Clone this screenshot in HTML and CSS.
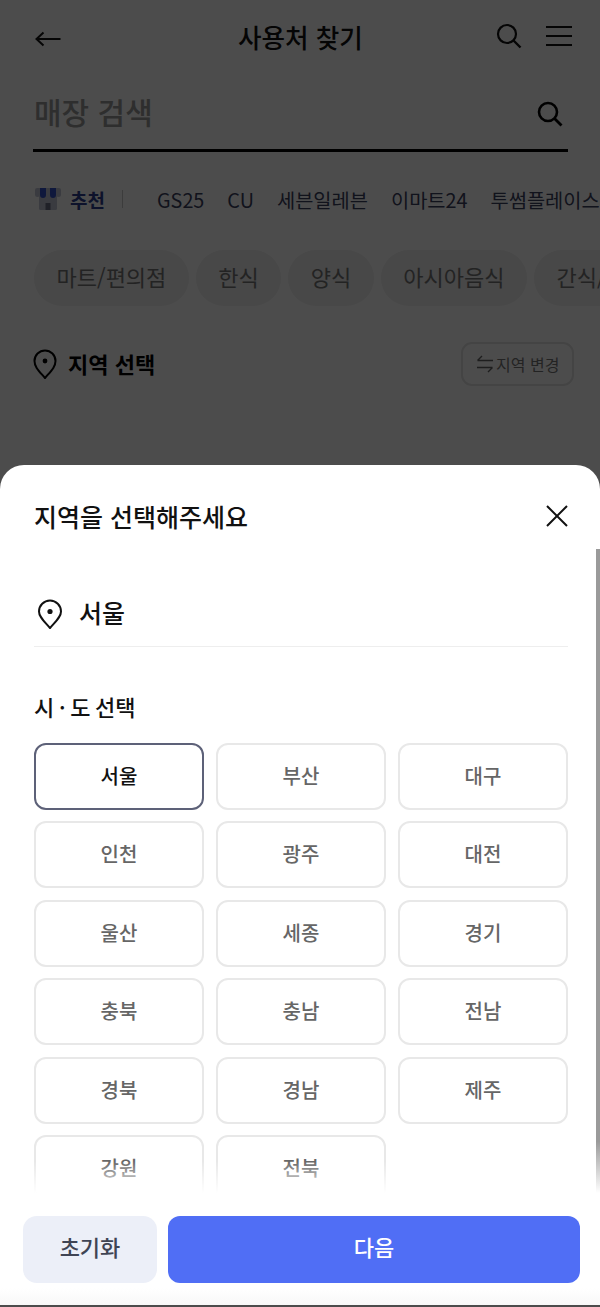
FILE: index.html
```html
<!DOCTYPE html>
<html lang="ko">
<head>
<meta charset="utf-8">
<title>사용처 찾기</title>
<link rel="stylesheet" href="styles.css">
</head>
<body>
<main class="page">
  <header class="top">
    <svg class="back" viewBox="0 0 26 16" width="26" height="16"><path d="M25.500 8H1.500M8.500 1.500 1.500 8l7 6.500" fill="none" stroke="#111" stroke-width="2"/></svg>
    <h1 class="top-title">사용처 찾기</h1>
    <div class="top-icons">
      <svg viewBox="0 0 26 26" width="26" height="26"><circle cx="11" cy="11" r="9" fill="none" stroke="#111" stroke-width="2.200"/><path d="M17.500 17.500 24.500 24.500" stroke="#111" stroke-width="2.400"/></svg>
      <svg viewBox="0 0 26 22" width="26" height="22"><path d="M0 2h26M0 11h26M0 20h26" stroke="#111" stroke-width="2"/></svg>
    </div>
  </header>
  <div class="search">
    <span class="search-ph">매장 검색</span>
    <svg viewBox="0 0 26 26" width="26" height="26"><circle cx="11" cy="11" r="9" fill="none" stroke="#000" stroke-width="2.600"/><path d="M17.500 17.500 24.500 24.500" stroke="#000" stroke-width="2.800"/></svg>
  </div>
  <nav class="brands">
    <span class="rec">
      <svg viewBox="0 0 26 22" width="26" height="22"><rect x="4" y="6" width="18" height="16" rx="1.500" fill="#c3c7d6"/><rect x="10.500" y="15" width="5" height="7" fill="#6b7188"/><path d="M0 2a2 2 0 0 1 2-2h3v6.500a2.500 2.500 0 0 1-5 0z" fill="#c3c7d6"/><path d="M5 0h6v7a3 3 0 0 1-6 0z" fill="#3553c8"/><path d="M11 0h4v7a2 2 0 0 1-4 0z" fill="#c3c7d6"/><path d="M15 0h6v7a3 3 0 0 1-6 0z" fill="#3553c8"/><path d="M21 0h3a2 2 0 0 1 2 2v4.500a2.500 2.500 0 0 1-5 0z" fill="#c3c7d6"/></svg>
      <b>추천</b>
    </span>
    <i class="sep"></i>
    <span>GS25</span><span>CU</span><span>세븐일레븐</span><span>이마트24</span><span>투썸플레이스</span>
  </nav>
  <div class="chips">
    <span class="chip">마트/편의점</span><span class="chip">한식</span><span class="chip">양식</span><span class="chip">아시아음식</span><span class="chip">간식/디저트</span>
  </div>
  <div class="area">
    <svg viewBox="0 0 24 30" width="24" height="30"><path d="M12 29C6 22 1.500 18 1.500 12a10.500 10.500 0 0 1 21 0C22.500 18 18 22 12 29z" fill="none" stroke="#000" stroke-width="2"/><circle cx="12" cy="12" r="2.400" fill="#000"/></svg>
    <strong class="area-title">지역 선택</strong>
    <button class="area-btn">
      <svg viewBox="0 0 18 18" width="18" height="18"><path d="M17 5.500H1.500M6 1 1.500 5.500M1 12.500h15.500M12 17l4.500-4.500" fill="none" stroke="#666" stroke-width="1.400"/></svg>
      지역 변경
    </button>
  </div>
</main>

<div class="dim"></div>

<section class="sheet">
  <div class="sheet-head">
    <h2 class="sheet-title">지역을 선택해주세요</h2>
    <svg viewBox="0 0 24 24" width="24" height="24"><path d="M2 2 22 22M22 2 2 22" stroke="#111" stroke-width="2"/></svg>
  </div>
  <div class="sheet-body">
    <div class="picked">
      <svg viewBox="0 0 26 30" width="26" height="30"><path d="M13 29C7 22 2 18 2 12.500a11 11 0 0 1 22 0C24 18 19 22 13 29z" fill="none" stroke="#111" stroke-width="2"/><circle cx="13" cy="12.500" r="2.600" fill="#111"/></svg>
      <span>서울</span>
    </div>
    <h3 class="sub">시 · 도 선택</h3>
    <div class="grid">
      <span class="cell on">서울</span><span class="cell">부산</span><span class="cell">대구</span>
      <span class="cell">인천</span><span class="cell">광주</span><span class="cell">대전</span>
      <span class="cell">울산</span><span class="cell">세종</span><span class="cell">경기</span>
      <span class="cell">충북</span><span class="cell">충남</span><span class="cell">전남</span>
      <span class="cell">경북</span><span class="cell">경남</span><span class="cell">제주</span>
      <span class="cell">강원</span><span class="cell">전북</span>
    </div>
    <div class="fade"></div>
    <div class="scrollbar"></div>
  </div>
  <div class="sheet-foot">
    <button class="btn-reset">초기화</button>
    <button class="btn-next">다음</button>
  </div>
</section>
</body>
</html>
```
FILE: styles.css
```css
* { box-sizing: border-box; }
html, body { margin: 0; padding: 0; }
body {
  width: 600px;
  height: 1307px;
  position: relative;
  overflow: hidden;
  background: #fff;
  font-family: "Noto Sans CJK KR", "Noto Sans", sans-serif;
  color: #111;
}
h1, h2, h3 { margin: 0; }
button { font-family: inherit; border: 0; padding: 0; }
svg { display: block; flex: none; }

.page { padding: 14px 0 0 34px; }
.top {
  display: flex;
  align-items: center;
  height: 46px;
  position: relative;
  padding-right: 28px;
  justify-content: space-between;
}
.back { margin: 4px 0 0 1px; }
.top-title {
  position: absolute;
  left: 204px;
  top: 0;
  font-size: 25.600px;
  line-height: 45px;
  font-weight: 500;
}
.top-icons { display: flex; align-items: center; gap: 24px; margin-top: -2px; }

.search {
  display: flex;
  justify-content: space-between;
  align-items: center;
  margin: 28px 32px 0 -1px;
  height: 64px;
  padding: 0 5px 10px 1px;
  border-bottom: 3px solid #000;
}
.search-ph { font-size: 30px; font-weight: 500; line-height: 44px; color: #9b9b9b; margin-bottom: 6px; }

.brands {
  display: flex;
  align-items: center;
  margin-top: 30px;
  height: 34px;
  white-space: nowrap;
  font-size: 19.800px;
  color: #3b4160;
  gap: 23px;
}
.rec { display: flex; align-items: center; gap: 9px; margin-left: 1px; }
.rec b { font-weight: 700; font-size: 19px; color: #2c3f8f; }
.sep { width: 1px; height: 18px; background: #c9c9c9; margin: 0 11px 0 -6px; }

.chips { display: flex; gap: 7px; margin-top: 34px; white-space: nowrap; }
.chip {
  flex: none;
  height: 56px;
  line-height: 52px;
  padding: 0 22.500px;
  border-radius: 28px;
  background: #f0f0f0;
  font-size: 22px;
  color: #777;
}

.area {
  display: flex;
  align-items: center;
  margin: 36px 26px 0 -1px;
  height: 44px;
}
.area-title { margin: -3px 0 0 11px; font-size: 22px; font-weight: 700; color: #000; }
.area-btn {
  margin-left: auto;
  display: flex;
  align-items: center;
  gap: 2px;
  width: 113px;
  height: 44px;
  padding-left: 13px;
  background: transparent;
  border: 2px solid #e4e4e4;
  border-radius: 11px;
  font-size: 16px;
  color: #777;
}

.dim {
  position: absolute;
  inset: 0;
  background: rgba(0, 0, 0, 0.7);
}

.sheet {
  position: absolute;
  left: 0;
  top: 465px;
  width: 600px;
  height: 840px;
  background: #fff;
  border-radius: 24px 24px 0 0;
  display: flex;
  flex-direction: column;
}
.sheet-head {
  flex: none;
  height: 84px;
  padding: 18px 31px 0 34px;
  display: flex;
  align-items: center;
  justify-content: space-between;
}
.sheet-title { font-size: 25px; font-weight: 500; line-height: 36px; color: #111; }

.sheet-body {
  position: relative;
  height: 644px;
  overflow: hidden;
  padding: 0 32px 0 34px;
}
.picked {
  display: flex;
  align-items: center;
  gap: 16px;
  height: 98px;
  padding: 32px 0 0 3px;
  border-bottom: 1px solid #eee;
  font-size: 25px;
  font-weight: 500;
}
.picked span { line-height: 34px; margin-top: -4px; }
.sub {
  margin-top: 42px;
  font-size: 22px;
  line-height: 34px;
  font-weight: 500;
  color: #111;
  word-spacing: -1.500px;
}
.grid {
  display: grid;
  grid-template-columns: repeat(3, 170px);
  grid-auto-rows: 67px;
  gap: 11.400px 12px;
  margin-top: 20px;
}
.cell {
  display: flex;
  align-items: center;
  justify-content: center;
  padding-bottom: 2px;
  border: 2px solid #e8e8e8;
  border-radius: 12px;
  font-size: 20px;
  font-weight: 500;
  color: #666;
}
.cell.on { border-color: #5d6178; color: #111; }
.fade {
  position: absolute;
  left: 0;
  right: 0;
  bottom: 0;
  height: 32px;
  background: linear-gradient(to bottom, rgba(255,255,255,0), #fff);
}
.scrollbar {
  position: absolute;
  right: 0;
  top: 0;
  width: 4px;
  height: 100%;
  background: linear-gradient(to bottom, #9a9a9a 92%, #fff);
}

.sheet-foot {
  flex: 1;
  display: flex;
  gap: 11px;
  padding: 23px 20px 0 23px;
  background: linear-gradient(to bottom, #fff 85%, #f8f8f8);
}
.btn-reset, .btn-next { height: 67px; font-size: 22px; font-weight: 500; padding-bottom: 7px; }
.btn-reset { width: 134px; border-radius: 14px; background: #eceff8; color: #3f4454; }
.btn-next { flex: 1; border-radius: 12px; background: #506ef5; color: #fff; }
```
